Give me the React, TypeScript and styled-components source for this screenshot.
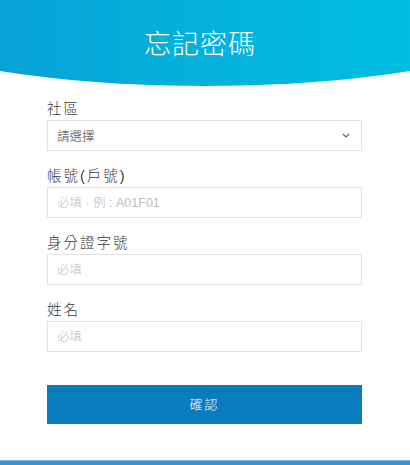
import React from "react";
import styled, { createGlobalStyle } from "styled-components";

const GlobalStyle = createGlobalStyle`
  * {
    box-sizing: border-box;
  }
  body {
    margin: 0;
    background: #ffffff;
    font-family: "Liberation Sans", "Noto Sans CJK TC", sans-serif;
  }
`;

const Page = styled.div`
  position: relative;
  width: 410px;
  height: 465px;
  overflow: hidden;
  display: flex;
  flex-direction: column;
`;

const Header = styled.header`
  height: 86px;
  flex-shrink: 0;
  display: flex;
  align-items: center;
  justify-content: center;
  padding-bottom: 2px;
  background: linear-gradient(90deg, #08a2d6 0%, #03b4dd 60%, #00bde1 100%);
  clip-path: ellipse(363px 86px at 50% 0);
`;

const Title = styled.h1`
  margin: 0 10px 0 0;
  font-family: "Noto Sans CJK TC", sans-serif;
  font-size: 27px;
  font-weight: 300;
  letter-spacing: 1px;
  color: #ffffff;
`;

const Form = styled.form`
  flex: 1;
  display: flex;
  flex-direction: column;
  padding: 12px 48px 0 47px;
`;

const Field = styled.div`
  display: flex;
  flex-direction: column;
  margin-bottom: 14px;
`;

const Label = styled.label`
  height: 22px;
  line-height: 22px;
  font-size: 14.5px;
  font-weight: 300;
  letter-spacing: 2px;
  color: #3a3a3a;
`;

const Input = styled.input`
  height: 31px;
  width: 100%;
  border: 1px solid #e2e2e2;
  border-radius: 0;
  padding: 0 9px;
  font-family: "Liberation Sans", "Noto Sans CJK TC", sans-serif;
  font-size: 12.5px;
  font-weight: 300;
  color: #333333;
  outline: none;
  &::placeholder {
    color: #bdbdbd;
  }
`;

const SelectBox = styled.div`
  height: 31px;
  display: flex;
  align-items: center;
  justify-content: space-between;
  border: 1px solid #e2e2e2;
  padding: 0 11px 0 9px;
  font-size: 12.5px;
  font-weight: 300;
  color: #444444;
`;

const Chevron = styled.svg`
  width: 8px;
  height: 5px;
`;

const Submit = styled.button`
  margin-top: 19px;
  height: 39px;
  border: none;
  padding: 0 0 3px;
  background: #0a7bbd;
  color: #ffffff;
  font-family: "Liberation Sans", "Noto Sans CJK TC", sans-serif;
  font-size: 13px;
  font-weight: 300;
  letter-spacing: 2px;
  cursor: pointer;
`;

const BottomBar = styled.div`
  height: 5px;
  flex-shrink: 0;
  background: #3895ce;
  border-top: 1px solid #6fb3de;
`;

const fields = [
  { label: "帳號(戶號)", placeholder: "必填 · 例 : A01F01" },
  { label: "身分證字號", placeholder: "必填" },
  { label: "姓名", placeholder: "必填" },
];

const App: React.FC = () => {
  return (
    <Page>
      <GlobalStyle />
      <Header>
        <Title>忘記密碼</Title>
      </Header>
      <Form onSubmit={(e) => e.preventDefault()}>
        <Field>
          <Label>社區</Label>
          <SelectBox>
            <span>請選擇</span>
            <Chevron viewBox="0 0 8 5">
              <path d="M0.8 0.8l3.2 3.2L7.2 0.8" fill="none" stroke="#555" strokeWidth="1.1" />
            </Chevron>
          </SelectBox>
        </Field>
        {fields.map((f) => (
          <Field key={f.label}>
            <Label>{f.label}</Label>
            <Input placeholder={f.placeholder} />
          </Field>
        ))}
        <Submit type="submit">確認</Submit>
      </Form>
      <BottomBar />
    </Page>
  );
};

export default App;
